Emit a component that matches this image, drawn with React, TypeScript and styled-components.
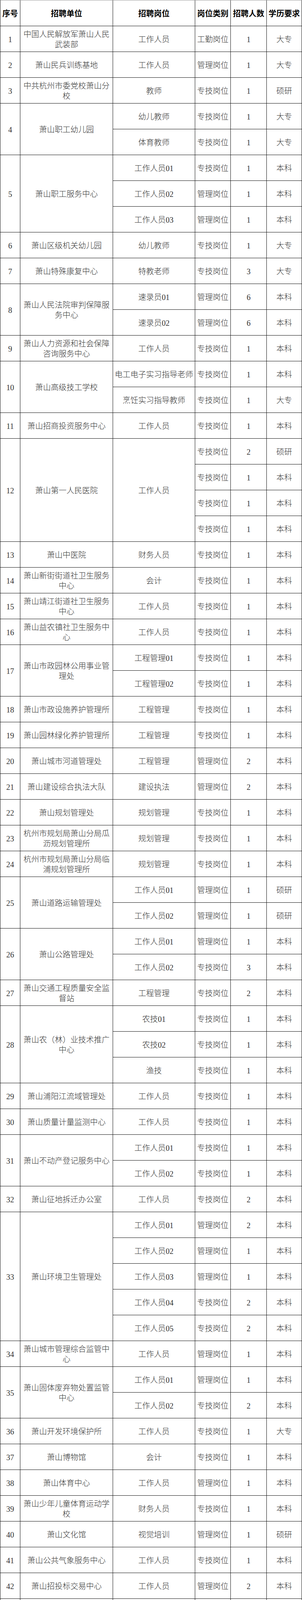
import styled, { createGlobalStyle } from "styled-components";

const GlobalStyle = createGlobalStyle`
  html, body {
    margin: 0;
    padding: 0;
    background: #ffffff;
  }
`;

const Grid = styled.div`
  display: grid;
  grid-template-columns: 51px 237px 210px 91px 92px 90px;
  grid-auto-rows: 66px;
  width: 772px;
  box-sizing: border-box;
  border-top: 1px solid #9a9a9a;
  border-left: 1px solid #111;
  font-family: "Liberation Serif", "Noto Sans CJK SC", serif;
  font-weight: 300;
  color: #333;
`;

interface ICellProps {
  $col: number;
  $row: number;
  $span?: number;
  $wrap?: boolean;
}

const Cell = styled.div<ICellProps>`
  grid-column: ${(p) => p.$col};
  grid-row: ${(p) => p.$row} / span ${(p) => p.$span ?? 1};
  display: flex;
  align-items: center;
  justify-content: center;
  box-sizing: border-box;
  border-right: 1px solid #111;
  border-bottom: 1px solid #111;
  padding: 2px 4px 0;
  font-size: 20px;
  line-height: 26px;
  text-align: center;
  white-space: ${(p) => (p.$wrap ? "normal" : "nowrap")};
`;

const HeadCell = styled(Cell)`
  padding: 0;
  font-family: "Noto Sans CJK SC", sans-serif;
  font-weight: 700;
  color: #000;
`;

type Job = [string | null, string, number, string];

interface IUnit {
  no: number;
  name: string;
  jobs: Job[];
}

const ZJ = "专技岗位";
const GL = "管理岗位";

const units: IUnit[] = [
  { no: 1, name: "中国人民解放军萧山人民武装部", jobs: [["工作人员", "工勤岗位", 1, "大专"]] },
  { no: 2, name: "萧山民兵训练基地", jobs: [["工作人员", GL, 1, "大专"]] },
  { no: 3, name: "中共杭州市委党校萧山分校", jobs: [["教师", ZJ, 1, "硕研"]] },
  {
    no: 4,
    name: "萧山职工幼儿园",
    jobs: [
      ["幼儿教师", ZJ, 1, "大专"],
      ["体育教师", ZJ, 1, "大专"],
    ],
  },
  {
    no: 5,
    name: "萧山职工服务中心",
    jobs: [
      ["工作人员01", ZJ, 1, "本科"],
      ["工作人员02", GL, 1, "本科"],
      ["工作人员03", GL, 1, "本科"],
    ],
  },
  { no: 6, name: "萧山区级机关幼儿园", jobs: [["幼儿教师", ZJ, 1, "大专"]] },
  { no: 7, name: "萧山特殊康复中心", jobs: [["特教老师", ZJ, 3, "大专"]] },
  {
    no: 8,
    name: "萧山人民法院审判保障服务中心",
    jobs: [
      ["速录员01", GL, 6, "本科"],
      ["速录员02", GL, 6, "本科"],
    ],
  },
  { no: 9, name: "萧山人力资源和社会保障咨询服务中心", jobs: [["工作人员", ZJ, 1, "本科"]] },
  {
    no: 10,
    name: "萧山高级技工学校",
    jobs: [
      ["电工电子实习指导老师", ZJ, 1, "本科"],
      ["烹饪实习指导教师", ZJ, 1, "大专"],
    ],
  },
  { no: 11, name: "萧山招商投资服务中心", jobs: [["工作人员", ZJ, 1, "本科"]] },
  {
    no: 12,
    name: "萧山第一人民医院",
    jobs: [
      ["工作人员", ZJ, 2, "硕研"],
      [null, ZJ, 1, "本科"],
      [null, ZJ, 1, "本科"],
      [null, ZJ, 1, "本科"],
    ],
  },
  { no: 13, name: "萧山中医院", jobs: [["财务人员", ZJ, 1, "本科"]] },
  { no: 14, name: "萧山新街街道社卫生服务中心", jobs: [["会计", ZJ, 1, "本科"]] },
  { no: 15, name: "萧山靖江街道社卫生服务中心", jobs: [["工作人员", ZJ, 1, "本科"]] },
  { no: 16, name: "萧山益农镇社卫生服务中心", jobs: [["工作人员", ZJ, 1, "本科"]] },
  {
    no: 17,
    name: "萧山市政园林公用事业管理处",
    jobs: [
      ["工程管理01", ZJ, 1, "本科"],
      ["工程管理02", ZJ, 1, "本科"],
    ],
  },
  { no: 18, name: "萧山市政设施养护管理所", jobs: [["工程管理", ZJ, 1, "本科"]] },
  { no: 19, name: "萧山园林绿化养护管理所", jobs: [["工程管理", ZJ, 1, "本科"]] },
  { no: 20, name: "萧山城市河道管理处", jobs: [["工程管理", GL, 2, "本科"]] },
  { no: 21, name: "萧山建设综合执法大队", jobs: [["建设执法", GL, 2, "本科"]] },
  { no: 22, name: "萧山规划管理处", jobs: [["规划管理", ZJ, 1, "本科"]] },
  { no: 23, name: "杭州市规划局萧山分局瓜沥规划管理所", jobs: [["规划管理", ZJ, 1, "本科"]] },
  { no: 24, name: "杭州市规划局萧山分局临浦规划管理所", jobs: [["规划管理", ZJ, 1, "本科"]] },
  {
    no: 25,
    name: "萧山道路运输管理处",
    jobs: [
      ["工作人员01", GL, 1, "硕研"],
      ["工作人员02", GL, 1, "硕研"],
    ],
  },
  {
    no: 26,
    name: "萧山公路管理处",
    jobs: [
      ["工作人员01", GL, 1, "本科"],
      ["工作人员02", ZJ, 3, "本科"],
    ],
  },
  { no: 27, name: "萧山交通工程质量安全监督站", jobs: [["工程管理", ZJ, 2, "本科"]] },
  {
    no: 28,
    name: "萧山农（林）业技术推广中心",
    jobs: [
      ["农技01", ZJ, 1, "本科"],
      ["农技02", ZJ, 1, "本科"],
      ["渔技", ZJ, 1, "本科"],
    ],
  },
  { no: 29, name: "萧山浦阳江流域管理处", jobs: [["工作人员", ZJ, 1, "本科"]] },
  { no: 30, name: "萧山质量计量监测中心", jobs: [["工作人员", ZJ, 1, "本科"]] },
  {
    no: 31,
    name: "萧山不动产登记服务中心",
    jobs: [
      ["工作人员01", ZJ, 1, "本科"],
      ["工作人员02", ZJ, 1, "本科"],
    ],
  },
  { no: 32, name: "萧山征地拆迁办公室", jobs: [["工作人员", ZJ, 2, "本科"]] },
  {
    no: 33,
    name: "萧山环境卫生管理处",
    jobs: [
      ["工作人员01", GL, 2, "本科"],
      ["工作人员02", GL, 1, "本科"],
      ["工作人员03", GL, 1, "本科"],
      ["工作人员04", ZJ, 2, "本科"],
      ["工作人员05", ZJ, 2, "本科"],
    ],
  },
  { no: 34, name: "萧山城市管理综合监管中心", jobs: [["工作人员", GL, 1, "本科"]] },
  {
    no: 35,
    name: "萧山固体废弃物处置监管中心",
    jobs: [
      ["工作人员01", GL, 1, "本科"],
      ["工作人员02", ZJ, 2, "本科"],
    ],
  },
  { no: 36, name: "萧山开发环境保护所", jobs: [["工作人员", ZJ, 1, "大专"]] },
  { no: 37, name: "萧山博物馆", jobs: [["会计", ZJ, 1, "本科"]] },
  { no: 38, name: "萧山体育中心", jobs: [["工作人员", GL, 1, "本科"]] },
  { no: 39, name: "萧山少年儿童体育运动学校", jobs: [["财务人员", ZJ, 1, "本科"]] },
  { no: 40, name: "萧山文化馆", jobs: [["视觉培训", GL, 1, "硕研"]] },
  { no: 41, name: "萧山公共气象服务中心", jobs: [["工作人员", ZJ, 1, "本科"]] },
  { no: 42, name: "萧山招投标交易中心", jobs: [["工作人员", GL, 2, "本科"]] },
  { no: 43, name: "萧山经济技术开发企业办事服务中心", jobs: [["文秘", GL, 1, "本科"]] },
  { no: 44, name: "萧山经济技术开发市政公用建设管理服务中心", jobs: [["工作人员", ZJ, 1, "本科"]] },
  { no: 45, name: "萧山科技城开发建设服务中心", jobs: [["工作人员", ZJ, 1, "本科"]] },
  { no: 46, name: "杭州空港新城综合保税服务中心", jobs: [["工作人员", ZJ, 1, "本科"]] },
  { no: 47, name: "萧山靖江街道综合服务中心", jobs: [["工作人员", ZJ, 1, "本科"]] },
  { no: 48, name: "萧山瓜沥镇综合服务中心", jobs: [["工作人员", ZJ, 2, "本科"]] },
  {
    no: 49,
    name: "萧山戴村镇综合服务中心",
    jobs: [
      ["工作人员01", ZJ, 1, "本科"],
      ["工作人员02", ZJ, 1, "本科"],
    ],
  },
  {
    no: 50,
    name: "萧山党湾镇综合服务中心",
    jobs: [
      ["财务", ZJ, 1, "本科"],
      ["工作人员", ZJ, 1, "本科"],
    ],
  },
  { no: 51, name: "萧山临浦镇综合服务中心", jobs: [["工作人员", GL, 1, "本科"]] },
  { no: 52, name: "萧山义桥镇综合服务中心", jobs: [["工作人员", ZJ, 1, "本科"]] },
  { no: 53, name: "萧山楼塔镇综合服务中心", jobs: [["财务", GL, 1, "大专"]] },
  {
    no: 54,
    name: "萧山益农镇综合服务中心",
    jobs: [
      ["工作人员01", ZJ, 1, "本科"],
      ["工作人员02", ZJ, 1, "本科"],
      ["工作人员03", ZJ, 1, "本科"],
    ],
  },
  {
    no: 55,
    name: "萧山进化镇综合服务中心",
    jobs: [
      ["工作人员01", GL, 1, "本科"],
      ["工作人员02", GL, 1, "大专"],
    ],
  },
];

const headers = ["序号", "招聘单位", "招聘岗位", "岗位类别", "招聘人数", "学历要求"];

// a job title with null titles after it is merged over those rows
function titleSpan(jobs: Job[], index: number) {
  let span = 1;
  while (jobs[index + span] && jobs[index + span][0] === null) span++;
  return span;
}

function App() {
  const cells: JSX.Element[] = [];
  let row = 2;

  units.forEach((unit) => {
    const n = unit.jobs.length;
    cells.push(
      <Cell key={`${unit.no}-no`} $col={1} $row={row} $span={n}>
        {unit.no}
      </Cell>,
      <Cell key={`${unit.no}-name`} $col={2} $row={row} $span={n} $wrap>
        {unit.name}
      </Cell>
    );
    unit.jobs.forEach(([title, category, count, education], i) => {
      const r = row + i;
      if (title !== null) {
        cells.push(
          <Cell key={`${unit.no}-${i}-t`} $col={3} $row={r} $span={titleSpan(unit.jobs, i)}>
            {title}
          </Cell>
        );
      }
      cells.push(
        <Cell key={`${unit.no}-${i}-c`} $col={4} $row={r}>
          {category}
        </Cell>,
        <Cell key={`${unit.no}-${i}-n`} $col={5} $row={r}>
          {count}
        </Cell>,
        <Cell key={`${unit.no}-${i}-e`} $col={6} $row={r}>
          {education}
        </Cell>
      );
    });
    row += n;
  });

  return (
    <>
      <GlobalStyle />
      <Grid>
        {headers.map((h, i) => (
          <HeadCell key={h} $col={i + 1} $row={1}>
            {h}
          </HeadCell>
        ))}
        {cells}
      </Grid>
    </>
  );
}

export default App;
